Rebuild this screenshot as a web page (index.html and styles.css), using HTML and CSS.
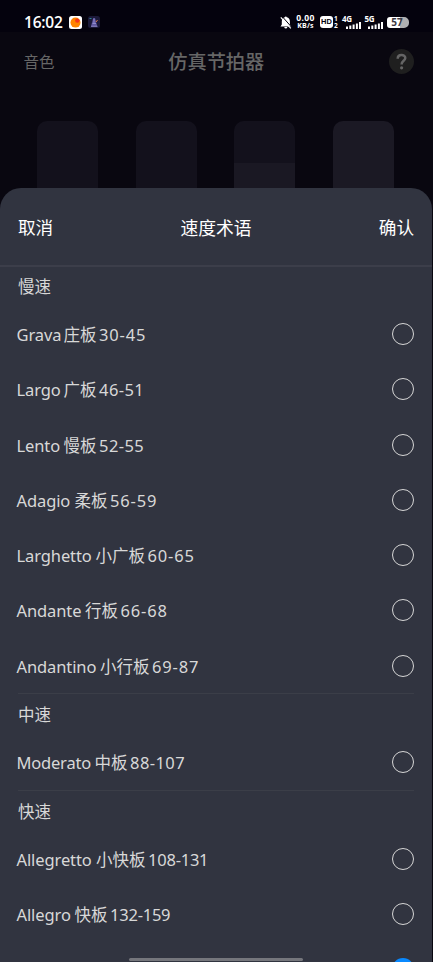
FILE: index.html
```html
<!DOCTYPE html>
<html lang="zh-CN">
<head>
<meta charset="utf-8">
<title>仿真节拍器</title>
<link rel="stylesheet" href="styles.css">
</head>
<body>
<div class="screen">
  <header class="status">
    <span class="clock">16:02</span>
    <svg class="app-a" width="13" height="13" viewBox="0 0 13 13"><rect width="13" height="13" rx="2.5" fill="#fff"/><circle cx="6.5" cy="6.6" r="5" fill="#ff8500"/><circle cx="8.300" cy="4.600" r="2.200" fill="#f5351c"/></svg>
    <svg class="app-b" width="12" height="12" viewBox="0 0 12 12"><rect width="12" height="12" rx="2.500" fill="#1b1938"/><path d="M5.200 2h1.800l2.300 8.500H3z" fill="#5f57a0"/><path d="M3 10.300h6.500M4.500 7.500h3.500M6 3v4" stroke="#9d98d6" stroke-width=".8"/><path d="m8 6 1.500-2" stroke="#dd7b45"/><path d="M1.500 2.500h2" stroke="#2b8292"/></svg>
    <div class="indicators">
      <svg class="bell" width="12" height="13" viewBox="0 0 12 13"><path d="M5.800.5a1 1 0 0 1 1 .8c2 .5 3.100 2.200 3.100 4.200v3l1.300 1.900H.5l1.300-1.900v-3c0-2 1.100-3.700 3-4.200a1 1 0 0 1 1-.8M4.200 11h3.200q-.3 1.500-1.600 1.500T4.200 11" fill="#fff"/><path d="m2 .3 9.500 10.700" stroke="#04020d" stroke-width="1"/><path d="m.8 1.300 10 11" stroke="#fff" stroke-width="1.200"/></svg>
      <div class="net"><span>0.00</span><span>KB/s</span></div>
      <div class="hd">HD</div>
      <div class="sims"><span>1</span><span>2</span></div>
      <div class="signal"><span>4G</span><svg width="15" height="7" viewBox="0 0 15 7"><path d="M1 4.500V7M4.300 3.600V7M7.600 2.500V7M10.900 1.500V7M14 0v7" stroke="#fff" stroke-width="2"/></svg></div>
      <div class="signal five"><span>5G</span><svg width="15" height="7" viewBox="0 0 15 7"><path d="M1 4.500V7M4.300 3.600V7M7.600 2.500V7M10.900 1.500V7M14 0v7" stroke="#fff" stroke-width="2"/></svg></div>
      <div class="battery">57</div>
    </div>
  </header>
  <nav class="appbar">
    <span class="tone">音色</span>
    <h1>仿真节拍器</h1>
    <svg class="help" width="25" height="25" viewBox="0 0 25 25"><circle cx="12.500" cy="12.500" r="12.500" fill="#1f1f1f"/><path d="M8.700 9.700c0-5 7.600-4.700 7.600-.6 0 2.800-3.700 2.700-3.700 6.300" fill="none" stroke="#656565" stroke-width="2.500"/><circle cx="12.600" cy="18.800" r="1.600" fill="#656565"/></svg>
  </nav>
  <div class="beats"><i></i><i></i><i class="half"></i><i class="full"></i></div>
  <main class="sheet">
    <div class="sheet-head"><span>取消</span><h2>速度术语</h2><span>确认</span></div>
    <section>
      <h3>慢速</h3>
      <div class="row"><p><b>Grava</b><span>庄板</span><em>30-45</em></p><i></i></div>
      <div class="row"><p><b>Largo</b><span>广板</span><em class="snug">46-51</em></p><i></i></div>
      <div class="row"><p><b>Lento</b><span>慢板</span><em class="snug">52-55</em></p><i></i></div>
      <div class="row"><p class="adagio"><b>Adagio</b><span>柔板</span><em>56-59</em></p><i></i></div>
      <div class="row"><p class="larghetto"><b>Larghetto</b><span>小广板</span><em>60-65</em></p><i></i></div>
      <div class="row"><p class="andante"><b>Andante</b><span>行板</span><em>66-68</em></p><i></i></div>
      <div class="row"><p class="andantino"><b>Andantino</b><span>小行板</span><em>69-87</em></p><i></i></div>
    </section>
    <section>
      <h3>中速</h3>
      <div class="row"><p class="moderato"><b>Moderato</b><span>中板</span><em class="snug">88-107</em></p><i></i></div>
    </section>
    <section>
      <h3>快速</h3>
      <div class="row"><p class="allegretto"><b>Allegretto</b><span>小快板</span><em class="narrow">108-131</em></p><i></i></div>
      <div class="row"><p class="allegro"><b>Allegro</b><span>快板</span><em class="narrow">132-159</em></p><i></i></div>
      <div class="row"><p></p><i class="selected"></i></div>
    </section>
  </main>
  <div class="home"></div>
</div>
</body>
</html>
```
FILE: styles.css
```css
* { box-sizing: border-box; margin: 0; padding: 0; }
body { background: #090710; font-family: "Noto Sans", "Noto Sans CJK SC", sans-serif; }
.screen { position: relative; width: 433px; height: 962px; overflow: hidden; display: flex; flex-direction: column; background: #090710; }
.status { height: 32px; flex: none; display: flex; align-items: center; padding: 12px 24px 0; background: #04020d; color: #fff; }
.clock { width: 45px; font: 600 15.5px/20px "Open Sans", sans-serif; letter-spacing: -.2px; white-space: nowrap; }
.app-b { margin-left: 6px; }
.indicators { margin-left: auto; display: flex; align-items: center; }
.net { width: 21px; margin-left: 3px; display: flex; flex-direction: column; text-align: center; font: 700 8.5px/8px "Open Sans", sans-serif; letter-spacing: .4px; }
.net span + span { font-size: 7px; line-height: 8px; letter-spacing: .2px; }
.hd { width: 13px; height: 12px; margin-left: 4px; border-radius: 3px; background: #fff; color: #04020d; font: 700 7.5px/12px "Liberation Sans", sans-serif; text-align: center; }
.sims { width: 5px; margin-left: 1px; display: flex; flex-direction: column; font: 700 6.5px/7.5px "Open Sans", sans-serif; }
.signal { width: 18.5px; height: 14px; margin-left: 3px; display: flex; flex-direction: column; align-items: flex-end; justify-content: space-between; }
.signal span { align-self: flex-start; height: 5px; font: 700 8px/7px "Open Sans", sans-serif; letter-spacing: -.2px; }
.signal svg { height: 7px; }
.five { margin-left: 4px; }
.battery { width: 22px; height: 11px; margin-left: 4px; padding-right: 2px; border-radius: 3px 5px 5px 3px; background: linear-gradient(90deg, #fff 57%, #b0b0b2 57%); color: #3c3a42; font: 700 10px/11px "Open Sans", sans-serif; text-align: center; }
.appbar { height: 58px; flex: none; display: grid; grid-template-columns: 1fr auto 1fr; align-items: center; padding: 0 19px 0 23.5px; color: #666; }
.tone { font-size: 15.5px; }
.appbar h1 { font-size: 19.2px; font-weight: 500; padding-right: 5px; }
.help { justify-self: end; }
.beats { height: 98px; flex: none; display: flex; justify-content: space-between; padding: 31px 39px 0 37px; }
.beats i { width: 61px; border-radius: 10px 10px 0 0; background: #13111c; }
.beats .half { background: linear-gradient(#13111c 42px, #1a1823 42px); }
.beats .full { background: #1b1924; }
.sheet { flex: 1; min-height: 0; width: 432px; background: #313440; border-radius: 21px 21px 0 0; color: #fff; overflow: hidden; }
.sheet-head { height: 79px; border-bottom: 2px solid #3c3e4a; display: grid; grid-template-columns: 1fr auto 1fr; align-items: center; padding: 0 18px; font-size: 17.6px; }
.sheet-head h2 { font-size: 17.8px; font-weight: 400; }
.sheet-head span:last-child { justify-self: end; }
section h3 { height: 39.5px; font-size: 16.5px; line-height: 40px; font-weight: 400; color: #d8d8d8; margin: 0 18px; }
section + section h3 { height: 41.25px; border-top: 1px solid #3b3e48; line-height: 42px; }
.row { height: 55.25px; display: flex; justify-content: space-between; align-items: center; padding: 0 18px 0 16.5px; }
.row p { display: flex; color: #d8d8d8; font-size: 16.5px; line-height: 24px; white-space: nowrap; padding-top: 2px; }
.row b, .row em { font-style: normal; font-weight: 400; }
.row b { width: 47px; letter-spacing: -.1px; }
.row .adagio b, .row .allegro b { width: 58px; }
.row .larghetto b { width: 79px; }
.row .andante b { width: 68.500px; }
.row .andantino b { width: 83.500px; }
.row .moderato b { width: 78px; letter-spacing: -.2px; }
.row .allegretto b { width: 79.500px; }
.row em { letter-spacing: .8px; }
.row em.snug { letter-spacing: .4px; }
.row em.narrow { letter-spacing: -.25px; }
.row p span { margin-right: 2.600px; }
.row > i { width: 22px; height: 22px; margin-right: -.4px; border: 1.500px solid #d6d6d6; border-radius: 50%; }
.row > i.selected { border: 0; background: #0989ff; }
.home { position: absolute; left: 129px; bottom: 1px; width: 174px; height: 3px; border-radius: 2px; background: #75767c; }
```
